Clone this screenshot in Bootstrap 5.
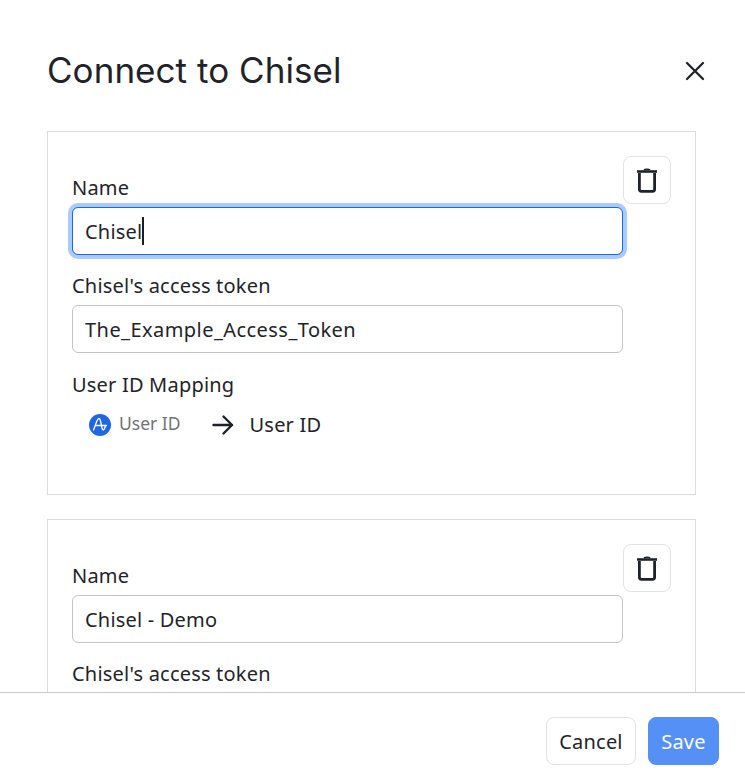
<!DOCTYPE html>
<html lang="en"><head><meta charset="utf-8"><title>Connect to Chisel</title>
<link href="https://cdn.jsdelivr.net/npm/bootstrap@5.3.0/dist/css/bootstrap.min.css" rel="stylesheet">
<style>
html,body{height:100%;margin:0;overflow:hidden}
body{font-family:"Noto Sans","Liberation Sans",sans-serif;color:#1f2329;background:#fff}
.shell{height:776px;width:745px}
.head{height:131px;padding:0 39px 31px 47px}
.head h1{font-family:Inter,"Liberation Sans",sans-serif;font-size:35px;font-weight:400;letter-spacing:.05px;margin:0;line-height:44px;color:#1f2329;padding-top:48px}
.xbtn{background:none;border:0;padding:0;width:22px;height:22px;line-height:0;margin-top:60px}
.scroller{overflow:hidden;padding:0 49px 0 47px;min-height:0}
.conn{border:1px solid #dcdcdc;border-radius:0;margin-bottom:24px;padding:24px;height:364px}
.fname{font-size:20px;letter-spacing:.2px;line-height:24px;margin:0 0 7px;color:#1f2329;display:block}
.fgroup{margin-bottom:19px}
.first{padding-top:20px}
.inp{height:48px;border:1px solid #c4c4c4;border-radius:6px;font-size:20px;letter-spacing:.2px;padding:0 12px;color:#1f2329;width:551px;font-family:inherit;box-shadow:none}
.inp.long{letter-spacing:.45px}
.inp.on{border:1px solid #1f66e5;box-shadow:0 0 0 4px #a9cbff}
.trash{width:48px;height:48px;border:1px solid #e2e2e2;border-radius:8px;background:#fff;padding:0;flex:none;align-self:flex-start}
.mapr{padding-left:17px;margin-top:11px;height:34px}
.amp{font-size:17.5px;color:#6f7377;padding-bottom:3px}
.ampi{width:22px;height:22px;flex:none}
.arrow{margin:0 16px 0 31px;flex:none}
.tgt{font-size:20px;letter-spacing:.2px}
.maplabel{padding-top:1px}
.foot{height:84px;border-top:1px solid #c9c9c9;padding:24px 26px 0 0;flex:none}
.bcancel,.bsave{height:48px;font-size:20px;letter-spacing:.2px;border-radius:8px;padding:1px 0 0;line-height:1}
.bcancel{width:90px;background:#fff;border:1px solid #e2e2e2;color:#1f2329}
.bsave{width:71px;background:#5590f6;border:1px solid #5590f6;color:#fff}
.caret{display:inline-block;width:2px;height:28px;background:#1a1d21;position:absolute;left:70px;top:10px}
.rel{position:relative}
</style></head>
<body>
<div class="shell d-flex flex-column">
  <div class="head d-flex align-items-start justify-content-between flex-shrink-0">
    <h1>Connect to Chisel</h1>
    <button class="xbtn" aria-label="Close"><svg width="22" height="22" viewBox="0 0 22 22" fill="none" stroke="#1f2329" stroke-width="2.300" stroke-linecap="round"><path d="M3 3l16 16M19 3L3 19"/></svg></button>
  </div>
  <div class="scroller flex-grow-1">
    <div class="conn d-flex">
      <div>
        <div class="fgroup first"><label class="fname">Name</label>
          <div class="rel"><input class="form-control inp on" value="Chisel"><span class="caret"></span></div></div>
        <div class="fgroup"><label class="fname">Chisel's access token</label>
          <input class="form-control inp long" value="The_Example_Access_Token"></div>
        <label class="fname maplabel">User ID Mapping</label>
        <div class="mapr d-flex align-items-center">
          <svg class="ampi" viewBox="0 0 22 22"><circle cx="11" cy="11" r="11" fill="#1f66e5"/><path d="M6 11.500h11.500M4.500 16C7 10 8 4.500 10 4.500S12 12 13.500 15.500c1 1.500 2-.5 3-3.500" fill="none" stroke="#fff" stroke-width="1.300" stroke-linecap="round"/></svg>
          <span class="amp ms-2">User ID</span>
          <svg class="arrow" width="22" height="20" viewBox="0 0 22 20" fill="none" stroke="#1f2329" stroke-width="2.400" stroke-linecap="round" stroke-linejoin="round"><path d="M1.500 10h18.500M11.500 1.500l8.500 8.500-8.500 8.500"/></svg>
          <span class="tgt">User ID</span>
        </div>
      </div>
      <button class="trash" aria-label="Delete"><svg width="24" height="26" viewBox="0 0 24 26" fill="none" stroke="#1f2329" stroke-width="2.800" stroke-linejoin="round"><path d="M2 4.500h20" stroke-width="2.600"/><path d="M9 3c1-1 5-1 6 0" stroke-width="1.600"/><path d="M4.400 6v16.300a2 2 0 0 0 2 2h11.200a2 2 0 0 0 2-2V6"/></svg></button>
    </div>
    <div class="conn d-flex">
      <div>
        <div class="fgroup first"><label class="fname">Name</label>
          <input class="form-control inp" value="Chisel - Demo"></div>
        <div class="fgroup"><label class="fname">Chisel's access token</label>
          <input class="form-control inp" value=""></div>
      </div>
      <button class="trash" aria-label="Delete"><svg width="24" height="26" viewBox="0 0 24 26" fill="none" stroke="#1f2329" stroke-width="2.800" stroke-linejoin="round"><path d="M2 4.500h20" stroke-width="2.600"/><path d="M9 3c1-1 5-1 6 0" stroke-width="1.600"/><path d="M4.400 6v16.300a2 2 0 0 0 2 2h11.200a2 2 0 0 0 2-2V6"/></svg></button>
    </div>
  </div>
  <div class="foot d-flex justify-content-end gap-2">
    <button class="btn bcancel me-1">Cancel</button>
    <button class="btn bsave">Save</button>
  </div>
</div>
</body></html>
